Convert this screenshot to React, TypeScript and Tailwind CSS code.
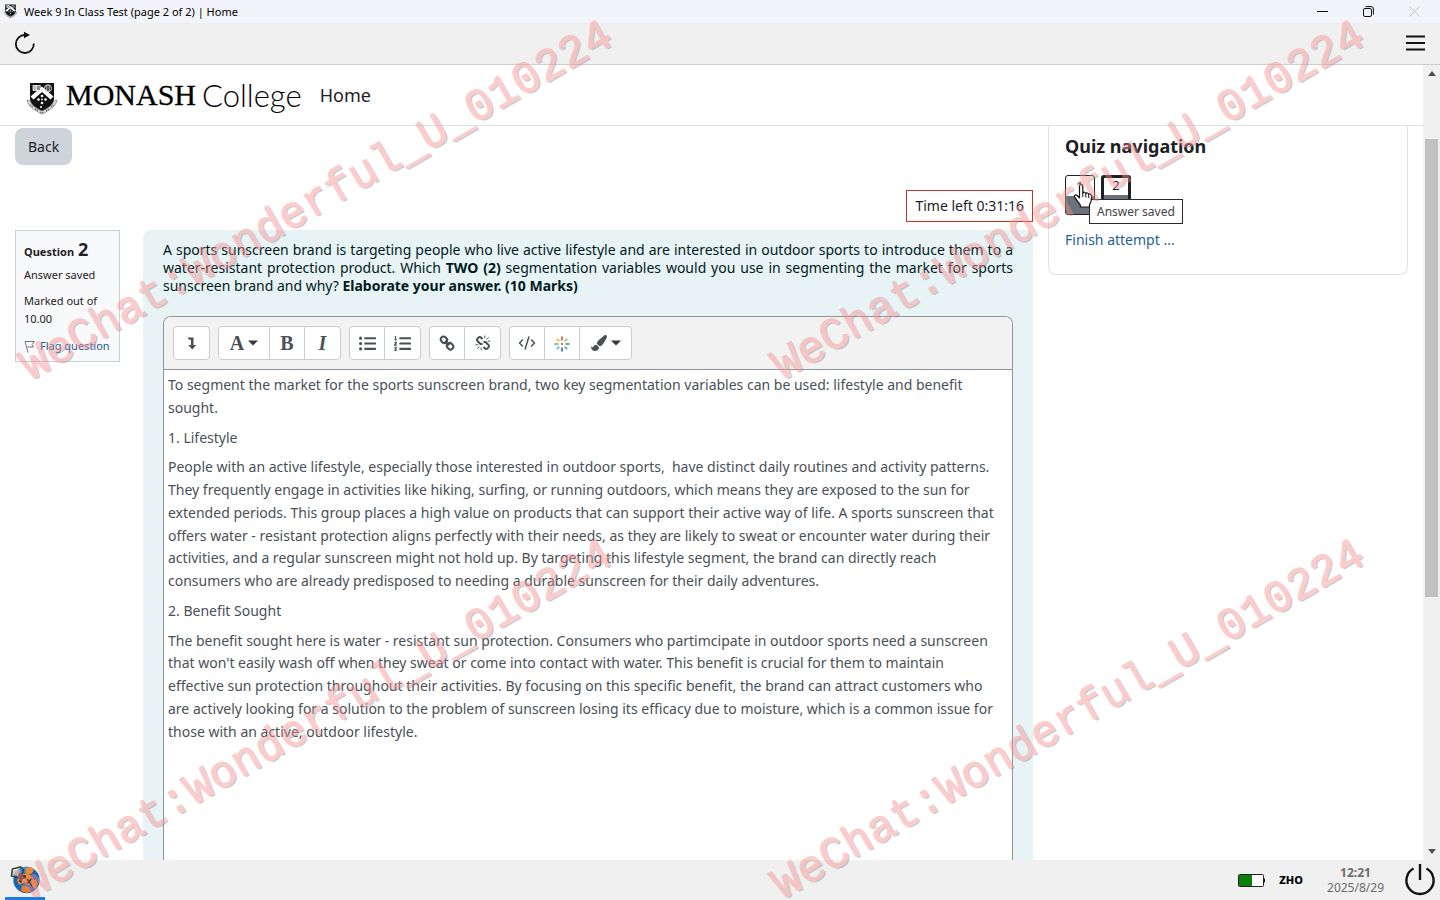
import React from "react";
import { FaListUl, FaListOl, FaPaintBrush } from "react-icons/fa";
import { CodeXml } from "lucide-react";

function Crest({ className }: { className: string }) {
  return (
    <svg viewBox="0 0 32 34" className={className} aria-hidden="true">
      <path d="M4 1h24v16c0 5-5 9-12 13C9 26 4 22 4 17z" fill="#111" />
      <path d="M4.500 14.500 16 4.500l11.500 10-3 3L16 10l-8.500 7.500z" fill="#fff" />
      <rect x="7" y="3.500" width="3.600" height="5" fill="#bbb" stroke="#fff" strokeWidth=".7" />
      <rect x="10.600" y="3.500" width="3.600" height="5" fill="#888" stroke="#fff" strokeWidth=".7" />
      <circle cx="22" cy="6.300" r="3.500" fill="none" stroke="#ddd" strokeWidth="1" />
      <path d="M22 2.500v8M20.400 3.500v5.500M23.600 3.500v5.500" stroke="#ddd" strokeWidth=".7" />
      <g fill="#fff">
        <circle cx="16" cy="14" r="1.300" />
        <circle cx="12.500" cy="17.500" r="1.300" />
        <circle cx="19.500" cy="17.500" r="1.300" />
        <circle cx="16" cy="21" r="1.300" />
        <circle cx="16" cy="17.500" r=".9" />
        <circle cx="15" cy="25" r="1" />
      </g>
      <path d="M1 18c1 6 7 10 15 14 8-4 14-8 15-14l-3.500 1.500C26 24 22 26 16 29 10 26 6 24 4.500 19.500z" fill="#ddd" stroke="#777" strokeWidth=".7" />
      <path d="M4 23l3 2M9 27l3 1.500M14 30.500h4M20 28.500l3-1.500M25 25l3-2" stroke="#666" strokeWidth="1.400" strokeDasharray="1.200 .8" />
    </svg>
  );
}

function Caret() {
  return (
    <svg viewBox="0 0 10 6" className="h-[6px] w-[10px]" aria-hidden="true">
      <path d="M0 .5h10L5 5.500z" fill="#343a40" />
    </svg>
  );
}

function LevelDown() {
  return (
    <svg viewBox="0 0 16 16" className="size-4" aria-hidden="true">
      <path d="M3.500 2.500H9.500V10h2.800L8.300 14.500 4.300 10H7V4.800H5z" fill="#495057" />
    </svg>
  );
}

function ChainIcon() {
  return (
    <svg viewBox="0 0 16 16" className="size-4" fill="none" stroke="#495057" strokeWidth="2.100" aria-hidden="true">
      <rect x="1.600" y="2" width="6.600" height="5.600" rx="2.600" transform="rotate(45 4.900 4.800)" />
      <rect x="7.800" y="8.400" width="6.600" height="5.600" rx="2.600" transform="rotate(45 11.100 11.200)" />
      <path d="M6 6l4.200 4.200" />
    </svg>
  );
}

function UnchainIcon() {
  return (
    <svg viewBox="0 0 16 16" className="size-4" fill="none" stroke="#495057" strokeWidth="2" aria-hidden="true">
      <path d="M7.500 4 6.200 2.700a2 2 0 0 0-2.800 0l-.7.700a2 2 0 0 0 0 2.800L5.500 9h2" />
      <path d="M8.500 12l1.300 1.300a2 2 0 0 0 2.800 0l.7-.7a2 2 0 0 0 0-2.800L10.500 7h-2" />
      <path d="M9.800 3.300V.5M11.500 4.500l2.200-2.200M12.700 6.200h2.800M6.200 12.700v2.800M4.500 11.500l-2.200 2.200M3.300 9.800H.5" strokeWidth=".9" />
    </svg>
  );
}

function SparkIcon() {
  return (
    <svg viewBox="0 0 16 16" className="mt-[2px] size-4" fill="none" strokeWidth="1.600" aria-hidden="true">
      <path d="M8 .5v4" stroke="#e04a3a" />
      <path d="M13.300 2.700l-2.600 2.600" stroke="#8fc65a" />
      <path d="M15.500 8h-4" stroke="#2f9a56" />
      <path d="M13.300 13.300l-2.600-2.600" stroke="#3aa7c4" />
      <path d="M8 15.500v-4" stroke="#33639c" />
      <path d="M2.700 13.300l2.600-2.600" stroke="#55b6d4" />
      <path d="M.5 8h4" stroke="#52ae6c" />
      <path d="M2.700 2.700l2.600 2.600" stroke="#f0b030" />
      <path d="M8 7v2" stroke="#d0483c" />
    </svg>
  );
}

function BrowserIcon() {
  return (
    <svg viewBox="0 0 32 30" className="h-[30px] w-8" aria-hidden="true">
      <circle cx="17.500" cy="16" r="13.200" fill="#1767b4" />
      <path d="M8 7a13 13 0 0 1 15-3l-3 4-8 1z" fill="#3f8fd0" />
      <path d="M17 4l5-1 3 3-3 4-5-1zM12 10l7-1 5 5-2 6-6-2-6 3-2-5z" fill="#f58a2c" />
      <path d="M19 15l8 1 2 4-3 5-4-4-6-1zM13 21l6 2 3 4-4 2-6-2z" fill="#f17c22" />
      <path d="M18 15l5 7M23 14l-5 6" stroke="#233850" strokeWidth="1.200" />
      <path d="M3.500 5l8-2 3 3-3 8-9-2z" fill="none" stroke="#40403c" strokeWidth="1.600" />
      <path d="M9 10l8 1.500-.5 3-3 .5-1 4-2.500-1.500 1-4z" fill="#302b28" />
      <path d="M5 7l6-1-2 6-5-1z" fill="#b6bab8" />
    </svg>
  );
}

function PointerHand() {
  return (
    <svg viewBox="0 0 20 26" className="h-[26px] w-5" aria-hidden="true">
      <path
        d="M6.500 3.200c0-2.300 3.300-2.300 3.300 0v7c.5-1.500 3-1.200 3 .5.600-1.200 2.700-.9 2.900.7.700-1 2.700-.6 2.800 1.300.2 4-.3 6.500-2 8.800V24H7.300v-2.200C5.200 19.700 3.600 17 1.700 14.200c-1-1.700.9-3 2.400-1.700l2.400 2.400z"
        fill="#fff"
        stroke="#111"
        strokeWidth="1.200"
        strokeLinejoin="round"
      />
      <path d="M9.800 10v4M12.800 11v3.500M15.700 12v3" stroke="#111" strokeWidth="1" />
    </svg>
  );
}

function ToolGroup({ children }: { children: React.ReactNode }) {
  return (
    <div className="flex h-[34px] divide-x divide-[#c9cdd1] overflow-hidden rounded border border-[#c9cdd1] bg-white">
      {children}
    </div>
  );
}

function Tool({ label, wide, children }: { label: string; wide?: boolean; children: React.ReactNode }) {
  return (
    <button
      type="button"
      aria-label={label}
      className={
        wide
          ? "flex w-[51px] items-center justify-center gap-1 text-[#495057]"
          : "flex w-[35px] items-center justify-center text-[#495057]"
      }
    >
      {children}
    </button>
  );
}

function Watermark({ place }: { place: string }) {
  return (
    <span
      className={`absolute origin-bottom-left -rotate-30 whitespace-nowrap font-['Liberation_Mono',monospace] text-[45px] leading-none text-[#f78f8f] opacity-45 [-webkit-text-stroke:1px_#f78f8f] [text-shadow:1px_2px_0_#8c8c8c] ${place}`}
    >
      WeChat:Wonderful_U_010224
    </span>
  );
}

export default function App() {
  return (
    <div className="relative flex h-screen flex-col overflow-hidden bg-white font-['Noto_Sans',sans-serif] text-sm text-[#1d2125]">
      <div className="flex h-[23px] shrink-0 items-center justify-between bg-[#f2f4f9] text-black">
        <div className="flex items-center gap-[6px] pl-[3px]">
          <Crest className="size-[15px]" />
          <h1 className="text-[11px]">Week 9 In Class Test (page 2 of 2) | Home</h1>
        </div>
        <div className="flex items-center gap-[35px] pr-5">
          <button type="button" aria-label="Minimize" className="size-[11px]">
            <svg viewBox="0 0 11 11"><path d="M0 5.500h11" stroke="#111" /></svg>
          </button>
          <button type="button" aria-label="Restore" className="size-[11px]">
            <svg viewBox="0 0 11 11" fill="none" stroke="#111">
              <rect x=".5" y="2.500" width="8" height="8" rx="1.500" />
              <path d="M2.500 .6H8a2.400 2.400 0 0 1 2.400 2.400v5.500" />
            </svg>
          </button>
          <button type="button" aria-label="Close" className="size-[11px]">
            <svg viewBox="0 0 11 11"><path d="M.5.5l10 10M10.500.5l-10 10" stroke="#c4c5c9" /></svg>
          </button>
        </div>
      </div>

      <div className="flex h-[42px] shrink-0 items-center justify-between border-b border-[#cfcfcf] bg-[#f0f0f0] pr-[15px] pb-[2px] pl-[14px]">
        <button type="button" aria-label="Reload">
          <svg viewBox="0 0 22 24" className="h-6 w-[22px]" fill="none">
            <path d="M19.800 12.500A9 9 0 1 1 11 4h2.500" stroke="#111" strokeWidth="1.800" />
            <path d="M10 .8 16 4l-6 3.200z" fill="#111" />
          </svg>
        </button>
        <button type="button" aria-label="Menu">
          <svg viewBox="0 0 19 16" className="h-4 w-[19px]">
            <path d="M0 1.500h19M0 8h19M0 14.500h19" stroke="#111" strokeWidth="1.800" />
          </svg>
        </button>
      </div>

      <div className="flex min-h-0 flex-1">
        <div className="flex min-w-0 flex-1 flex-col">
          <header className="flex h-[61px] shrink-0 items-center border-b border-[#dee2e6] pl-[26px]">
            <a href="#" className="flex items-center text-black">
              <Crest className="mt-2 mr-2 h-[34px] w-8" />
              <span className="font-['Liberation_Serif',serif] text-[30px] leading-none [-webkit-text-stroke:0.3px_#000]">MONASH</span>
              <span className="ml-[6px] font-['Lato',sans-serif] text-[31px] leading-none font-light">College</span>
            </a>
            <a href="#" className="ml-[18px] text-lg">Home</a>
          </header>

          <div className="flex min-h-0 flex-1 gap-[15px] overflow-hidden px-[15px]">
            <main className="flex min-w-0 flex-1 flex-col items-start pt-[2px]">
              <button type="button" className="h-[37px] rounded-lg bg-[#ced4da] px-[13px]">Back</button>
              <div className="mt-[25px] flex h-8 items-center self-end border border-[#ca3120] px-2">Time left 0:31:16</div>

              <div className="mt-2 flex min-h-0 w-full flex-1 items-start gap-[23px]">
                <section className="h-[132px] w-[105px] shrink-0 border border-[#cad0d7] bg-[#f8f9fa] pt-2 pl-2 text-[11px] leading-[18px]">
                  <h2 className="flex h-5 items-baseline gap-1 font-bold leading-5">
                    Question <span className="text-lg leading-5">2</span>
                  </h2>
                  <p className="mt-[7px]">Answer saved</p>
                  <p className="mt-2">Marked out of<br />10.00</p>
                  <a href="#" className="mt-[9px] flex items-center gap-1 whitespace-nowrap text-[#1f5a94]">
                    <svg viewBox="0 0 12 13" className="h-[13px] w-3" fill="none" stroke="#777">
                      <path d="M1 1.500h9.500L8 4.500l1.500 2.500H3.500M1 1.500 4 12.500" />
                    </svg>
                    Flag question
                  </a>
                </section>

                <section className="flex h-full min-w-0 flex-1 flex-col rounded-t-lg bg-[#e7f3f5] px-5 pt-[11px] text-[#001a1e]">
                  <p className="text-justify leading-[18px]">
                    A sports sunscreen brand is targeting people who live active lifestyle and are interested in outdoor sports to
                    introduce them to a water-resistant protection product. Which <b>TWO (2)</b> segmentation variables would you
                    use in segmenting the market for sports sunscreen brand and why? <b>Elaborate your answer. (10 Marks)</b>
                  </p>

                  <div className="mt-[21px] flex min-h-0 flex-1 flex-col overflow-hidden rounded-t-lg border-x border-t border-[#8f959e] bg-white">
                    <div role="toolbar" aria-label="Text formatting" className="flex h-[53px] shrink-0 items-center gap-2 border-b border-[#8f959e] bg-[#f2f2f2] pl-[9px]">
                      <ToolGroup>
                        <Tool label="Show more buttons"><LevelDown /></Tool>
                      </ToolGroup>
                      <ToolGroup>
                        <Tool label="Paragraph styles" wide>
                          <span className="font-['Liberation_Serif',serif] text-xl font-bold">A</span><Caret />
                        </Tool>
                        <Tool label="Bold"><span className="font-['Liberation_Serif',serif] text-xl font-bold">B</span></Tool>
                        <Tool label="Italic"><span className="font-['Liberation_Serif',serif] text-xl font-bold italic">I</span></Tool>
                      </ToolGroup>
                      <ToolGroup>
                        <Tool label="Unordered list"><FaListUl className="size-[17px]" /></Tool>
                        <Tool label="Ordered list"><FaListOl className="size-[17px]" /></Tool>
                      </ToolGroup>
                      <ToolGroup>
                        <Tool label="Link"><ChainIcon /></Tool>
                        <Tool label="Unlink"><UnchainIcon /></Tool>
                      </ToolGroup>
                      <ToolGroup>
                        <Tool label="HTML"><CodeXml className="size-[18px]" strokeWidth={2} /></Tool>
                        <Tool label="Insert interactive content"><SparkIcon /></Tool>
                        <Tool label="Brush" wide><FaPaintBrush className="size-4" /><Caret /></Tool>
                      </ToolGroup>
                    </div>
                    <div
                      role="textbox"
                      aria-multiline="true"
                      aria-label="Answer text"
                      contentEditable
                      suppressContentEditableWarning
                      className="flex flex-col gap-[7px] pt-1 pr-[10px] pl-1 leading-relaxed text-[#495057]"
                    >
                      <p>To segment the market for the sports sunscreen brand, two key segmentation variables can be used: lifestyle and benefit sought.</p>
                      <p>1. Lifestyle</p>
                      <p>
                        People with an active lifestyle, especially those interested in outdoor sports, &nbsp;have distinct daily
                        routines and activity patterns. They frequently engage in activities like hiking, surfing, or running
                        outdoors, which means they are exposed to the sun for extended periods. This group places a high value on
                        products that can support their active way of life. A sports sunscreen that offers water - resistant
                        protection aligns perfectly with their needs, as they are likely to sweat or encounter water during their
                        activities, and a regular sunscreen might not hold up. By targeting this lifestyle segment, the brand can
                        directly reach consumers who are already predisposed to needing a durable sunscreen for their daily
                        adventures.
                      </p>
                      <p>2. Benefit Sought</p>
                      <p>
                        The benefit sought here is water - resistant sun protection. Consumers who partimcipate in outdoor sports
                        need a sunscreen that won't easily wash off when they sweat or come into contact with water. This benefit
                        is crucial for them to maintain effective sun protection throughout their activities. By focusing on this
                        specific benefit, the brand can attract customers who are actively looking for a solution to the problem
                        of sunscreen losing its efficacy due to moisture, which is a common issue for those with an active,
                        outdoor lifestyle.
                      </p>
                    </div>
                  </div>
                </section>
              </div>
            </main>

            <aside className="h-[149px] w-[360px] shrink-0 rounded-b-lg border-x border-b border-[#dee2e6] px-4 pt-2">
              <h2 className="text-lg leading-6 font-bold">Quiz navigation</h2>
              <div className="relative mt-[17px] flex gap-[6px]">
                <a href="#" className="flex h-10 w-[30px] flex-col overflow-hidden rounded-[3px] border border-[#1d2125] text-center text-[13px] leading-5">
                  <span className="flex-1">1</span>
                  <span className="h-[19px] bg-[#6a737b]" />
                </a>
                <a href="#" className="flex h-10 w-[30px] flex-col overflow-hidden rounded-[3px] border-3 border-[#1d2125] text-center text-[13px] leading-[14px]">
                  <span className="flex-1">2</span>
                  <span className="h-[17px] bg-[#6a737b]" />
                </a>
                <div role="tooltip" className="absolute top-6 left-6 flex h-[25px] items-center border border-[#2b2b2b] bg-white px-[7px] text-xs whitespace-nowrap text-[#444]">
                  Answer saved
                </div>
                <div className="absolute top-2 left-2"><PointerHand /></div>
              </div>
              <a href="#" className="mt-[14px] block leading-[22px] text-[#1f5f96]">Finish attempt ...</a>
            </aside>
          </div>
        </div>

        <div className="flex w-[17px] shrink-0 flex-col items-center bg-[#f0f0f0] py-[6px]" aria-hidden="true">
          <svg viewBox="0 0 8 5" className="h-[5px] w-2"><path d="M4 0l4 5H0z" fill="#505050" /></svg>
          <div className="mt-[63px] w-[13px] flex-[457] bg-[#c1c1c1]" />
          <div className="flex-[252]" />
          <svg viewBox="0 0 8 5" className="h-[5px] w-2"><path d="M4 5l4-5H0z" fill="#505050" /></svg>
        </div>
      </div>

      <footer className="flex h-10 shrink-0 items-center justify-between bg-[#f0f0f0] pr-1 pl-[5px]">
        <button type="button" aria-label="Browser" className="flex h-10 w-10 items-center justify-center border-b-3 border-[#1c7be0]">
          <BrowserIcon />
        </button>
        <div className="flex items-center">
          <svg viewBox="0 0 27 13" className="h-[13px] w-[27px]" role="img" aria-label="Battery">
            <rect x=".5" y=".5" width="25" height="12" rx="1" fill="#fff" stroke="#222" />
            <rect x="1" y="1" width="13" height="11" fill="#0a800a" />
            <path d="M26.500 4.500v4" stroke="#222" />
          </svg>
          <span className="ml-[14px] text-[11px] font-extrabold text-black">ZHO</span>
          <time className="ml-6 text-center text-xs leading-[15px] text-[#6b6b6b]">
            <b className="block">12:21</b>2025/8/29
          </time>
          <button type="button" aria-label="Power" className="ml-5">
            <svg viewBox="0 0 32 32" className="size-8" fill="none" stroke="#111" strokeWidth="2.400">
              <path d="M9.500 4.500a13.600 13.600 0 1 0 13 0M16 0v16" />
            </svg>
          </button>
        </div>
      </footer>

      <div className="pointer-events-none absolute inset-0 overflow-hidden" aria-hidden="true">
        <Watermark place="left-[36px] top-[345px]" />
        <Watermark place="left-[788px] top-[345px]" />
        <Watermark place="left-[36px] top-[864px]" />
        <Watermark place="left-[788px] top-[864px]" />
      </div>
    </div>
  );
}
